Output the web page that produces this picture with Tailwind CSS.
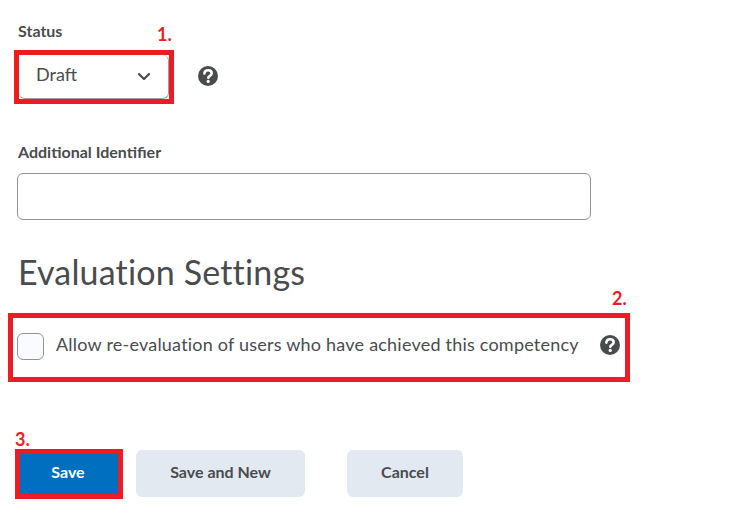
<!doctype html>
<html lang="en">
<head>
    <meta charset="UTF-8">
    <title>Evaluation Settings</title>
    <script src="https://cdn.jsdelivr.net/npm/@tailwindcss/browser@4"></script>
</head>
<body class="bg-white">
    <div class="relative w-[734px] h-[518px] overflow-hidden font-['Lato','Liberation_Sans',sans-serif] text-[#494c4e]">
        <div class="flex flex-col pl-[17px] pt-[21px]">
            <!-- Status -->
            <label class="text-[16px] leading-[19px] font-bold pl-px">Status</label>
            <div class="flex items-center mt-[10px] -ml-[3px]">
                <div class="relative w-[160px] h-[54px] border-[5px] border-[#ed1c24] bg-white">
                    <div class="flex items-center justify-between h-full pl-[17px] pr-[17px] pb-[4px] rounded-[6px] border-r border-b border-[#9ea1a4] text-[18px]">
                        <span>Draft</span>
                        <svg width="14" height="14" viewBox="0 0 14 14" class="mt-[2px]"><path d="M2 5l5 5 5-5" fill="none" stroke="#494c4e" stroke-width="2.2" stroke-linecap="round" stroke-linejoin="round"/></svg>
                    </div>
                </div>
                <svg width="22" height="22" viewBox="0 0 22 22" class="ml-[23px] mb-[2px]">
                    <circle cx="11" cy="11" r="10" fill="#494c4e"/>
                    <path d="M7.4 8.6c0-2.1 1.6-3.4 3.7-3.4s3.6 1.3 3.6 3c0 2.6-3.4 2.6-3.4 4.6" fill="none" stroke="#fff" stroke-width="2.6" stroke-linecap="round"/>
                    <circle cx="11.2" cy="16.4" r="1.6" fill="#fff"/>
                </svg>
            </div>

            <!-- Additional Identifier -->
            <label class="text-[16px] leading-[19px] font-bold pl-px mt-[38px]">Additional Identifier</label>
            <input type="text" class="block w-[574px] h-[47px] mt-[12px] bg-white border border-[#8f9396] rounded-[6px]">

            <!-- Evaluation Settings -->
            <h2 class="text-[34px] leading-[42px] font-normal pl-[1px] mt-[31px] tracking-[0.17px]">Evaluation Settings</h2>
            <div class="flex items-center w-[622px] h-[69px] mt-[20px] -ml-[9px] border-[5px] border-[#ed1c24] pl-[4px]">
                <span class="w-[27px] h-[27px] shrink-0 mb-[2px] rounded-[6px] border border-[#8f9396] bg-[#f9fbff]"></span>
                <span class="ml-[12px] mb-[7px] text-[18px] leading-[24px] tracking-[0.215px] whitespace-nowrap">Allow re-evaluation of users who have achieved this competency</span>
                <svg width="22" height="22" viewBox="0 0 22 22" class="ml-auto mr-[4px] mb-[5px]">
                    <circle cx="11" cy="11" r="10" fill="#494c4e"/>
                    <path d="M7.4 8.6c0-2.1 1.6-3.4 3.7-3.4s3.6 1.3 3.6 3c0 2.6-3.4 2.6-3.4 4.6" fill="none" stroke="#fff" stroke-width="2.6" stroke-linecap="round"/>
                    <circle cx="11.2" cy="16.4" r="1.6" fill="#fff"/>
                </svg>
            </div>

            <!-- Buttons -->
            <div class="flex items-start mt-[67px] -ml-[2px]">
                <button class="w-[108px] h-[50px] pb-[4px] pr-[2px] border-[5px] border-[#ed1c24] bg-[#006fbf] text-white text-[16px] font-bold">Save</button>
                <button class="w-[169px] h-[47px] mt-[1px] pb-[3px] ml-[13px] rounded-[6px] bg-[#e3e9f1] text-[16px] font-bold">Save and New</button>
                <button class="w-[116px] h-[47px] mt-[1px] pb-[3px] ml-[42px] rounded-[6px] bg-[#e3e9f1] text-[16px] font-bold">Cancel</button>
            </div>
        </div>

        <!-- Step annotations -->
        <span class="absolute left-[157px] top-[24px] text-[18px] leading-[20px] font-bold text-[#ed1c24]">1.</span>
        <span class="absolute left-[612px] top-[288px] text-[18px] leading-[20px] font-bold text-[#ed1c24]">2.</span>
        <span class="absolute left-[15px] top-[429px] text-[18px] leading-[20px] font-bold text-[#ed1c24]">3.</span>
    </div>
</body>
</html>
